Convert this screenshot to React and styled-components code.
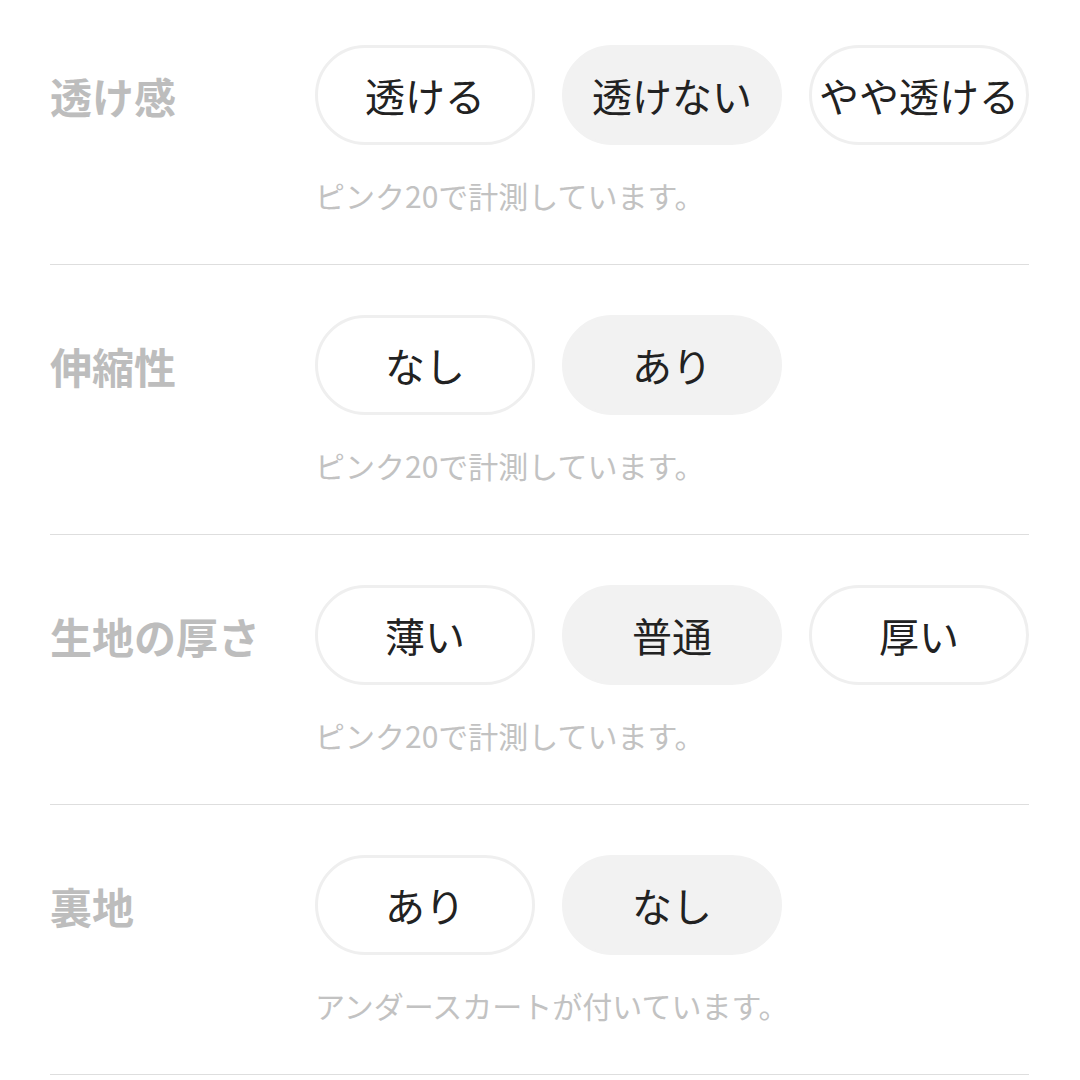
import styled, {createGlobalStyle} from "styled-components"

const GlobalStyle = createGlobalStyle`
	body {
		margin: 0;
		background: #fff;
		font-family: "Noto Sans CJK JP", "Noto Sans", sans-serif;
	}
`

const Page = styled.div`
	padding: 0 51px 0 50px;
	margin-top: -5px;
`

const Section = styled.section`
	padding: 50px 0 49px;
	border-bottom: 1px solid #dedede;
`

const Row = styled.div`
	display: flex;
	align-items: center;
`

const Label = styled.div`
	width: 265px;
	flex-shrink: 0;
	font-size: 42px;
	font-weight: 700;
	color: #bdbdbd;
`

const Options = styled.div`
	display: flex;
	gap: 27px;
`

const Pill = styled.div`
	box-sizing: border-box;
	width: 220px;
	height: 100px;
	border-radius: 50px;
	display: flex;
	align-items: center;
	justify-content: center;
	font-size: 40px;
	color: #222;
	background: ${(p) => (p.$active ? "#f2f2f2" : "#fff")};
	border: 3px solid ${(p) => (p.$active ? "#f2f2f2" : "#efefef")};
`

const Note = styled.div`
	margin: 30px 0 0 265px;
	font-size: 30px;
	line-height: 40px;
	color: #c2c2c2;
`

const sections = [
	{label: "透け感", options: ["透ける", "透けない", "やや透ける"], active: 1, note: "ピンク20で計測しています。"},
	{label: "伸縮性", options: ["なし", "あり"], active: 1, note: "ピンク20で計測しています。"},
	{label: "生地の厚さ", options: ["薄い", "普通", "厚い"], active: 1, note: "ピンク20で計測しています。"},
	{label: "裏地", options: ["あり", "なし"], active: 1, note: "アンダースカートが付いています。"},
]

export default function App() {
	return (
		<>
			<GlobalStyle />
			<Page>
				{sections.map((s) => (
					<Section key={s.label}>
						<Row>
							<Label>{s.label}</Label>
							<Options>
								{s.options.map((o, i) => (
									<Pill key={o} $active={i === s.active}>
										{o}
									</Pill>
								))}
							</Options>
						</Row>
						<Note>{s.note}</Note>
					</Section>
				))}
			</Page>
		</>
	)
}
